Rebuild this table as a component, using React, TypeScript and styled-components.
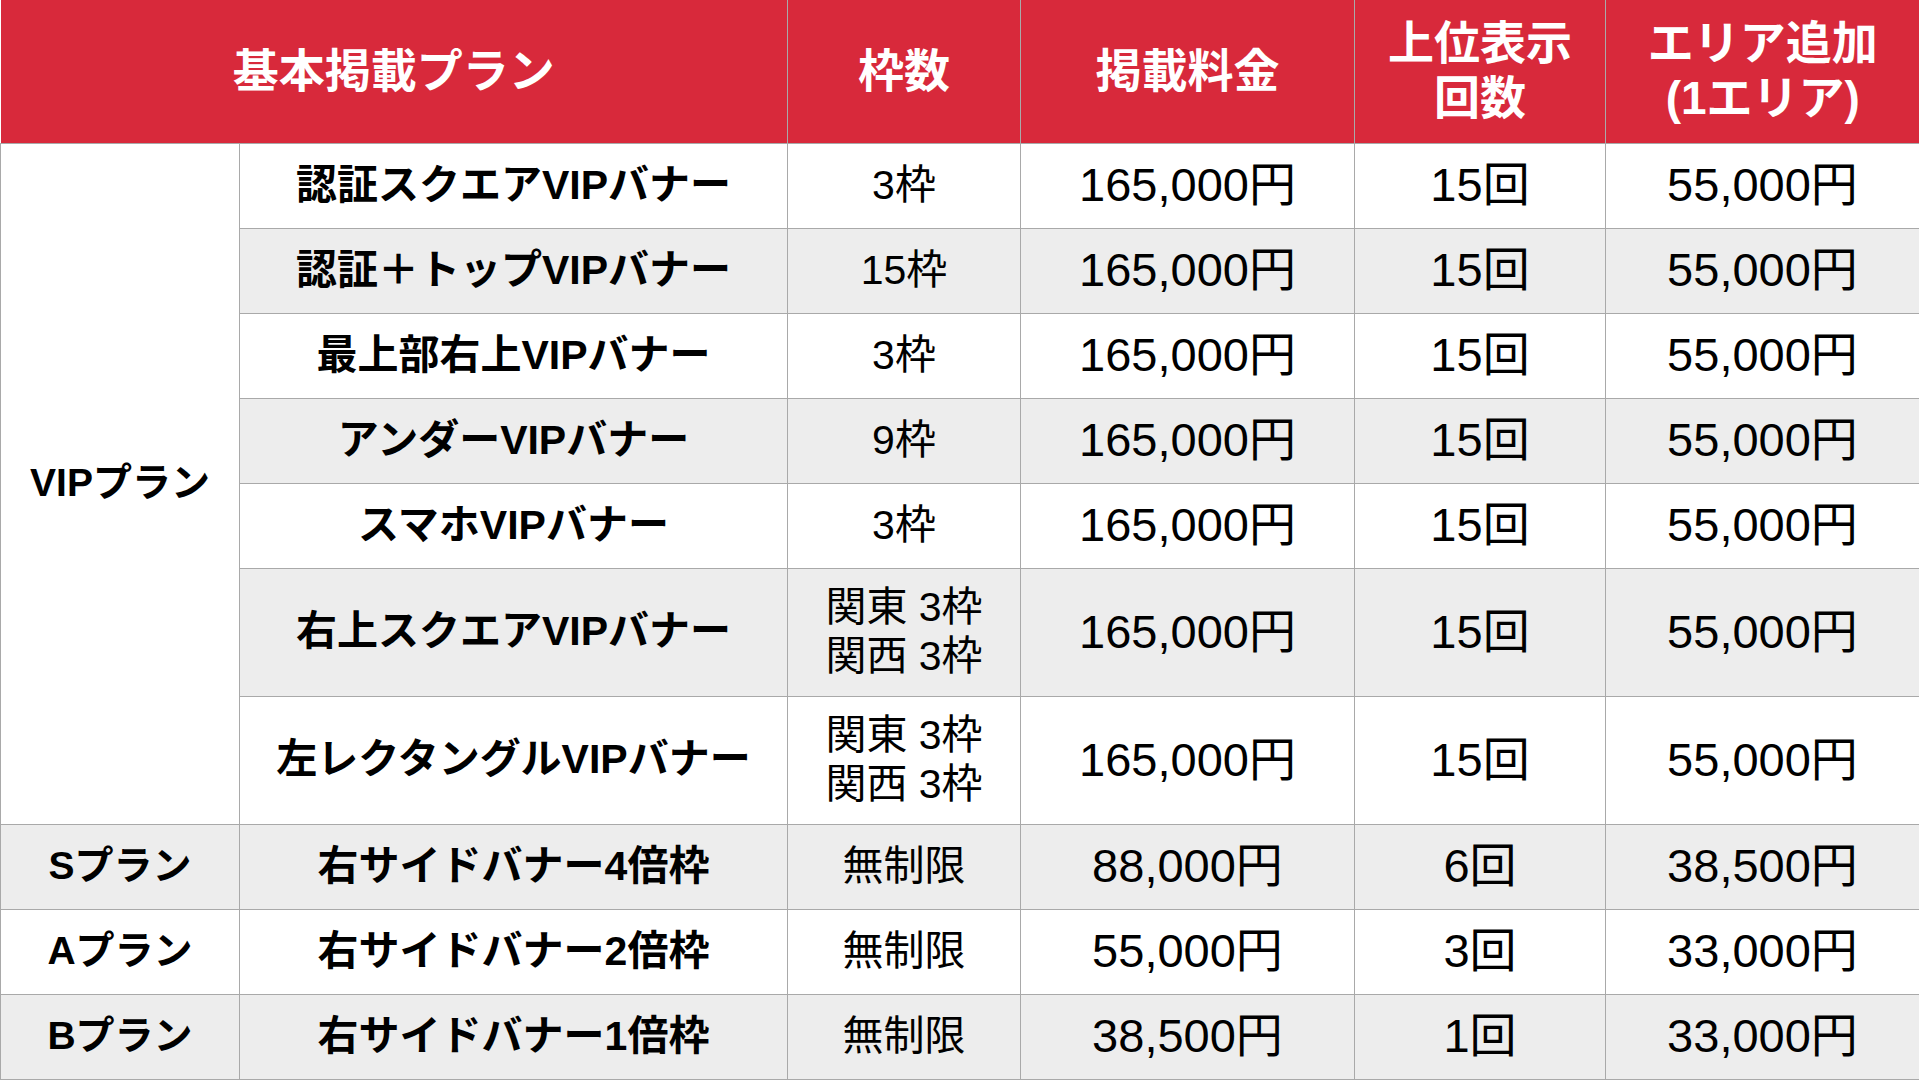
import React from "react";
import styled, { createGlobalStyle } from "styled-components";

const Global = createGlobalStyle`
  html, body { margin: 0; padding: 0; background: #ffffff; }
  body { font-family: "Liberation Sans", "Noto Sans CJK JP", sans-serif; color: #000; }
`;

const FONT = `"Liberation Sans", "Noto Sans CJK JP", sans-serif`;
const LINE = "#a9a9a9";
const SHADE = "#ededed";
const RED = "#d8293b";

const Table = styled.table`
  width: 1919px;
  border-collapse: collapse;
  table-layout: fixed;
  font-family: ${FONT};
`;

const HeadRow = styled.tr`
  height: 143px;
  background: ${RED};
`;

const HeadCell = styled.th`
  color: #ffffff;
  font-size: 46px;
  font-weight: 700;
  line-height: 1.2;
  text-align: center;
  vertical-align: middle;
  padding: 0;
  border-left: 1px solid ${LINE};
  border-bottom: 1px solid ${LINE};
  &:first-child { border-left: none; }
`;

const Row = styled.tr<{ $shade: boolean; $tall: boolean }>`
  height: ${(p) => (p.$tall ? 128 : 85)}px;
  background: ${(p) => (p.$shade ? SHADE : "#ffffff")};
`;

const Cell = styled.td`
  border: 1px solid ${LINE};
  text-align: center;
  vertical-align: middle;
  padding: 0;
  white-space: nowrap;
  line-height: 1.2;
`;

const PlanCell = styled(Cell)<{ $shade: boolean }>`
  font-size: 39px;
  font-weight: 700;
  background: ${(p) => (p.$shade ? SHADE : "#ffffff")};
`;

const NameCell = styled(Cell)`
  font-size: 41px;
  font-weight: 700;
`;

const SlotCell = styled(Cell)`
  font-size: 41px;
  line-height: 1.2;
`;

const NumCell = styled(Cell)`
  font-size: 47px;
`;

type Item = {
  name: string;
  slots: string[];
  price: string;
  top: string;
  area: string;
};

const vip: Item[] = [
  { name: "認証スクエアVIPバナー", slots: ["3枠"], price: "165,000円", top: "15回", area: "55,000円" },
  { name: "認証＋トップVIPバナー", slots: ["15枠"], price: "165,000円", top: "15回", area: "55,000円" },
  { name: "最上部右上VIPバナー", slots: ["3枠"], price: "165,000円", top: "15回", area: "55,000円" },
  { name: "アンダーVIPバナー", slots: ["9枠"], price: "165,000円", top: "15回", area: "55,000円" },
  { name: "スマホVIPバナー", slots: ["3枠"], price: "165,000円", top: "15回", area: "55,000円" },
  { name: "右上スクエアVIPバナー", slots: ["関東 3枠", "関西 3枠"], price: "165,000円", top: "15回", area: "55,000円" },
  { name: "左レクタングルVIPバナー", slots: ["関東 3枠", "関西 3枠"], price: "165,000円", top: "15回", area: "55,000円" },
];

const others: (Item & { plan: string })[] = [
  { plan: "Sプラン", name: "右サイドバナー4倍枠", slots: ["無制限"], price: "88,000円", top: "6回", area: "38,500円" },
  { plan: "Aプラン", name: "右サイドバナー2倍枠", slots: ["無制限"], price: "55,000円", top: "3回", area: "33,000円" },
  { plan: "Bプラン", name: "右サイドバナー1倍枠", slots: ["無制限"], price: "38,500円", top: "1回", area: "33,000円" },
];

const Slots: React.FC<{ lines: string[] }> = ({ lines }) => (
  <>
    {lines.map((l, i) => (
      <React.Fragment key={i}>
        {i > 0 && <br />}
        {l}
      </React.Fragment>
    ))}
  </>
);

export default function App() {
  return (
    <>
      <Global />
      <Table>
        <colgroup>
          <col style={{ width: 239 }} />
          <col style={{ width: 548 }} />
          <col style={{ width: 233 }} />
          <col style={{ width: 334 }} />
          <col style={{ width: 251 }} />
          <col style={{ width: 314 }} />
        </colgroup>
        <thead>
          <HeadRow>
            <HeadCell colSpan={2}>基本掲載プラン</HeadCell>
            <HeadCell>枠数</HeadCell>
            <HeadCell>掲載料金</HeadCell>
            <HeadCell>
              上位表示
              <br />
              回数
            </HeadCell>
            <HeadCell>
              エリア追加
              <br />
              (1エリア)
            </HeadCell>
          </HeadRow>
        </thead>
        <tbody>
          {vip.map((r, i) => (
            <Row key={r.name} $shade={i % 2 === 1} $tall={r.slots.length > 1}>
              {i === 0 && (
                <PlanCell rowSpan={vip.length} $shade={false}>
                  VIPプラン
                </PlanCell>
              )}
              <NameCell>{r.name}</NameCell>
              <SlotCell>
                <Slots lines={r.slots} />
              </SlotCell>
              <NumCell>{r.price}</NumCell>
              <NumCell>{r.top}</NumCell>
              <NumCell>{r.area}</NumCell>
            </Row>
          ))}
          {others.map((r, j) => {
            const shade = (vip.length + j) % 2 === 1;
            return (
              <Row key={r.plan} $shade={shade} $tall={false}>
                <PlanCell $shade={shade}>{r.plan}</PlanCell>
                <NameCell>{r.name}</NameCell>
                <SlotCell>
                  <Slots lines={r.slots} />
                </SlotCell>
                <NumCell>{r.price}</NumCell>
                <NumCell>{r.top}</NumCell>
                <NumCell>{r.area}</NumCell>
              </Row>
            );
          })}
        </tbody>
      </Table>
    </>
  );
}
